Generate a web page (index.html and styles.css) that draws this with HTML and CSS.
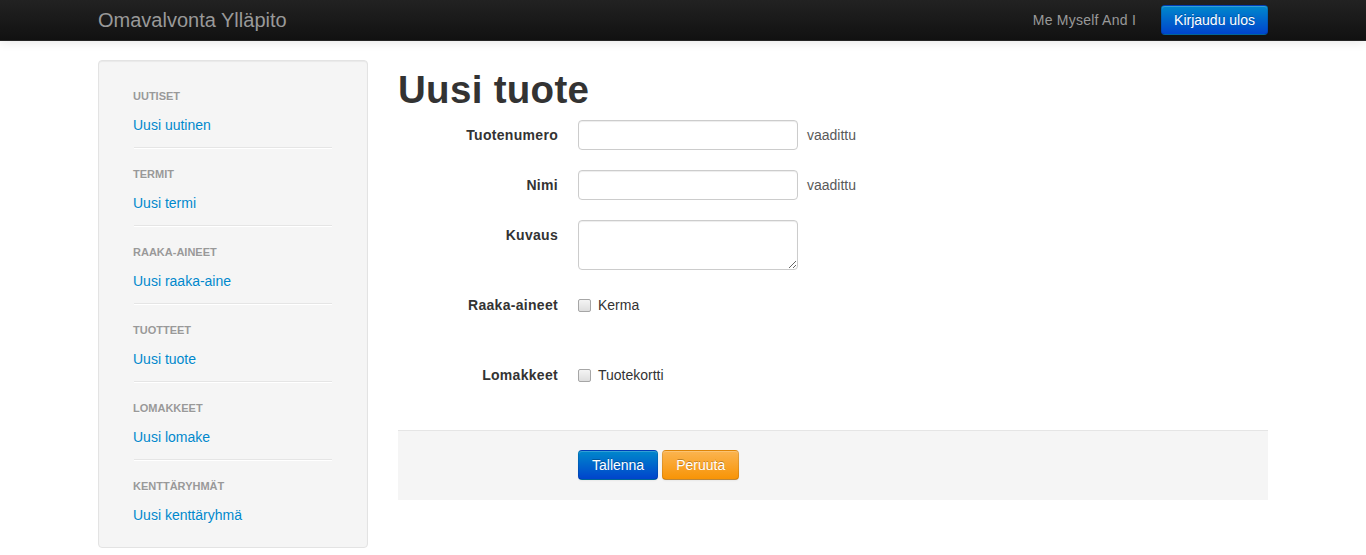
FILE: index.html
```html
<!DOCTYPE html>
<html lang="fi">
<head>
<meta charset="utf-8">
<title>Omavalvonta Ylläpito</title>
<link rel="stylesheet" href="styles.css">
</head>
<body>
<header class="navbar">
  <div class="container nav-inner">
    <a class="brand" href="#">Omavalvonta Ylläpito</a>
    <div class="nav-right">
      <span class="navbar-text">Me Myself And I</span>
      <a class="btn btn-primary" href="#">Kirjaudu ulos</a>
    </div>
  </div>
</header>
<div class="container main">
  <aside class="sidebar">
    <ul class="nav-list">
      <li class="nav-header">Uutiset</li>
      <li><a href="#">Uusi uutinen</a></li>
      <li class="divider"></li>
      <li class="nav-header">Termit</li>
      <li><a href="#">Uusi termi</a></li>
      <li class="divider"></li>
      <li class="nav-header">Raaka-aineet</li>
      <li><a href="#">Uusi raaka-aine</a></li>
      <li class="divider"></li>
      <li class="nav-header">Tuotteet</li>
      <li><a href="#">Uusi tuote</a></li>
      <li class="divider"></li>
      <li class="nav-header">Lomakkeet</li>
      <li><a href="#">Uusi lomake</a></li>
      <li class="divider"></li>
      <li class="nav-header">Kenttäryhmät</li>
      <li><a href="#">Uusi kenttäryhmä</a></li>
    </ul>
  </aside>
  <main class="content">
    <h1>Uusi tuote</h1>
    <form class="form-horizontal">
      <div class="control-group">
        <label class="control-label" for="nro">Tuotenumero</label>
        <div class="controls"><input id="nro" type="text" class="input"><span class="help-inline">vaadittu</span></div>
      </div>
      <div class="control-group">
        <label class="control-label" for="nimi">Nimi</label>
        <div class="controls"><input id="nimi" type="text" class="input"><span class="help-inline">vaadittu</span></div>
      </div>
      <div class="control-group">
        <label class="control-label" for="kuvaus">Kuvaus</label>
        <div class="controls"><textarea id="kuvaus" class="textarea"></textarea></div>
      </div>
      <div class="control-group tall">
        <span class="control-label">Raaka-aineet</span>
        <div class="controls"><label class="checkbox"><input type="checkbox" class="cb">Kerma</label></div>
      </div>
      <div class="control-group tall">
        <span class="control-label">Lomakkeet</span>
        <div class="controls"><label class="checkbox"><input type="checkbox" class="cb">Tuotekortti</label></div>
      </div>
      <div class="form-actions">
        <button type="button" class="btn btn-primary">Tallenna</button>
        <button type="button" class="btn btn-warning">Peruuta</button>
      </div>
    </form>
  </main>
</div>
</body>
</html>
```
FILE: styles.css
```css
* { box-sizing: border-box; }
html, body { margin: 0; padding: 0; }
body {
  font-family: "Liberation Sans", Arial, Helvetica, sans-serif;
  font-size: 14px;
  line-height: 20px;
  color: #333;
  background: #fff;
}
a { color: #0088cc; text-decoration: none; }
.container { width: 1170px; margin: 0 auto; }

.navbar {
  height: 41px;
  background: linear-gradient(to bottom, #222222, #111111);
  border-bottom: 1px solid #252525;
  box-shadow: 0 1px 10px rgba(0,0,0,.1);
}
.nav-inner { display: flex; align-items: center; justify-content: space-between; height: 40px; }
.brand { font-size: 20px; line-height: 20px; color: #999; font-weight: 200; }
.nav-right { display: flex; align-items: center; }
.navbar-text { color: #999; line-height: 40px; letter-spacing: .25px; }

.btn {
  display: inline-block;
  padding: 4px 13px;
  font-family: inherit;
  font-size: 14px;
  line-height: 20px;
  height: 30px;
  color: #fff;
  text-shadow: 0 -1px 0 rgba(0,0,0,.25);
  border: 1px solid rgba(0,0,0,.1);
  border-bottom-color: rgba(0,0,0,.25);
  border-radius: 4px;
  box-shadow: inset 0 1px 0 rgba(255,255,255,.2), 0 1px 2px rgba(0,0,0,.05);
  cursor: pointer;
}
.btn-primary { background: linear-gradient(to bottom, #0088cc, #0044cc); }
.btn-warning { background: linear-gradient(to bottom, #fbb450, #f89406); }
.nav-right .btn { margin-left: 25px; padding: 4px 12px; }

.main { display: flex; gap: 30px; padding-top: 19px; align-items: flex-start; }
.sidebar {
  width: 270px;
  flex: none;
  background: #f5f5f5;
  border: 1px solid #e3e3e3;
  border-radius: 4px;
  padding: 19px;
  box-shadow: inset 0 1px 1px rgba(0,0,0,.05);
}
.nav-list { list-style: none; margin: 0; padding: 0 15px; }
.nav-header {
  padding: 6px 0 3px;
  font-size: 11px;
  font-weight: bold;
  line-height: 20px;
  color: #999;
  text-transform: uppercase;
  text-shadow: 0 1px 0 rgba(255,255,255,.5);
}
.nav-list li a { display: block; padding: 6px 0 3px; line-height: 20px; text-shadow: 0 1px 0 rgba(255,255,255,.5); }
.nav-list .divider {
  height: 2px;
  margin: 9px 1px 9px;
  background: #e5e5e5;
  border-bottom: 1px solid #fff;
}

.content { width: 870px; flex: none; }
h1 {
  margin: 10px 0;
  font-size: 38.5px;
  line-height: 40px;
  font-weight: bold;
  color: #333;
  letter-spacing: .3px;
}
.form-horizontal { margin: 0; }
.control-group { display: flex; margin-bottom: 20px; }
.control-group.tall { min-height: 50px; }
.control-label {
  width: 160px;
  padding-top: 5px;
  text-align: right;
  font-weight: bold;
  letter-spacing: .3px;
  flex: none;
}
.controls { margin-left: 20px; display: flex; align-items: flex-start; }
.input, .textarea {
  width: 220px;
  height: 30px;
  padding: 4px 6px;
  font-family: inherit;
  font-size: 14px;
  line-height: 20px;
  color: #555;
  border: 1px solid #ccc;
  border-radius: 4px;
  box-shadow: inset 0 1px 1px rgba(0,0,0,.075);
  background: #fff;
}
.textarea { height: 50px; display: block; margin: 0; }
.help-inline { padding-left: 9px; line-height: 30px; color: #595959; }
.checkbox { display: flex; align-items: center; padding-top: 5px; line-height: 20px; }
.cb {
  appearance: none;
  -webkit-appearance: none;
  width: 13px;
  height: 13px;
  margin: 0 7px 0 0;
  border: 1px solid #a6a6a6;
  border-radius: 2px;
  background: linear-gradient(to bottom, #f4f4f4, #dedede);
}

.form-actions {
  margin: 20px 0 20px;
  padding: 19px 20px 20px 180px;
  background: #f5f5f5;
  border-top: 1px solid #e5e5e5;
  display: flex;
  gap: 4px;
}
```
